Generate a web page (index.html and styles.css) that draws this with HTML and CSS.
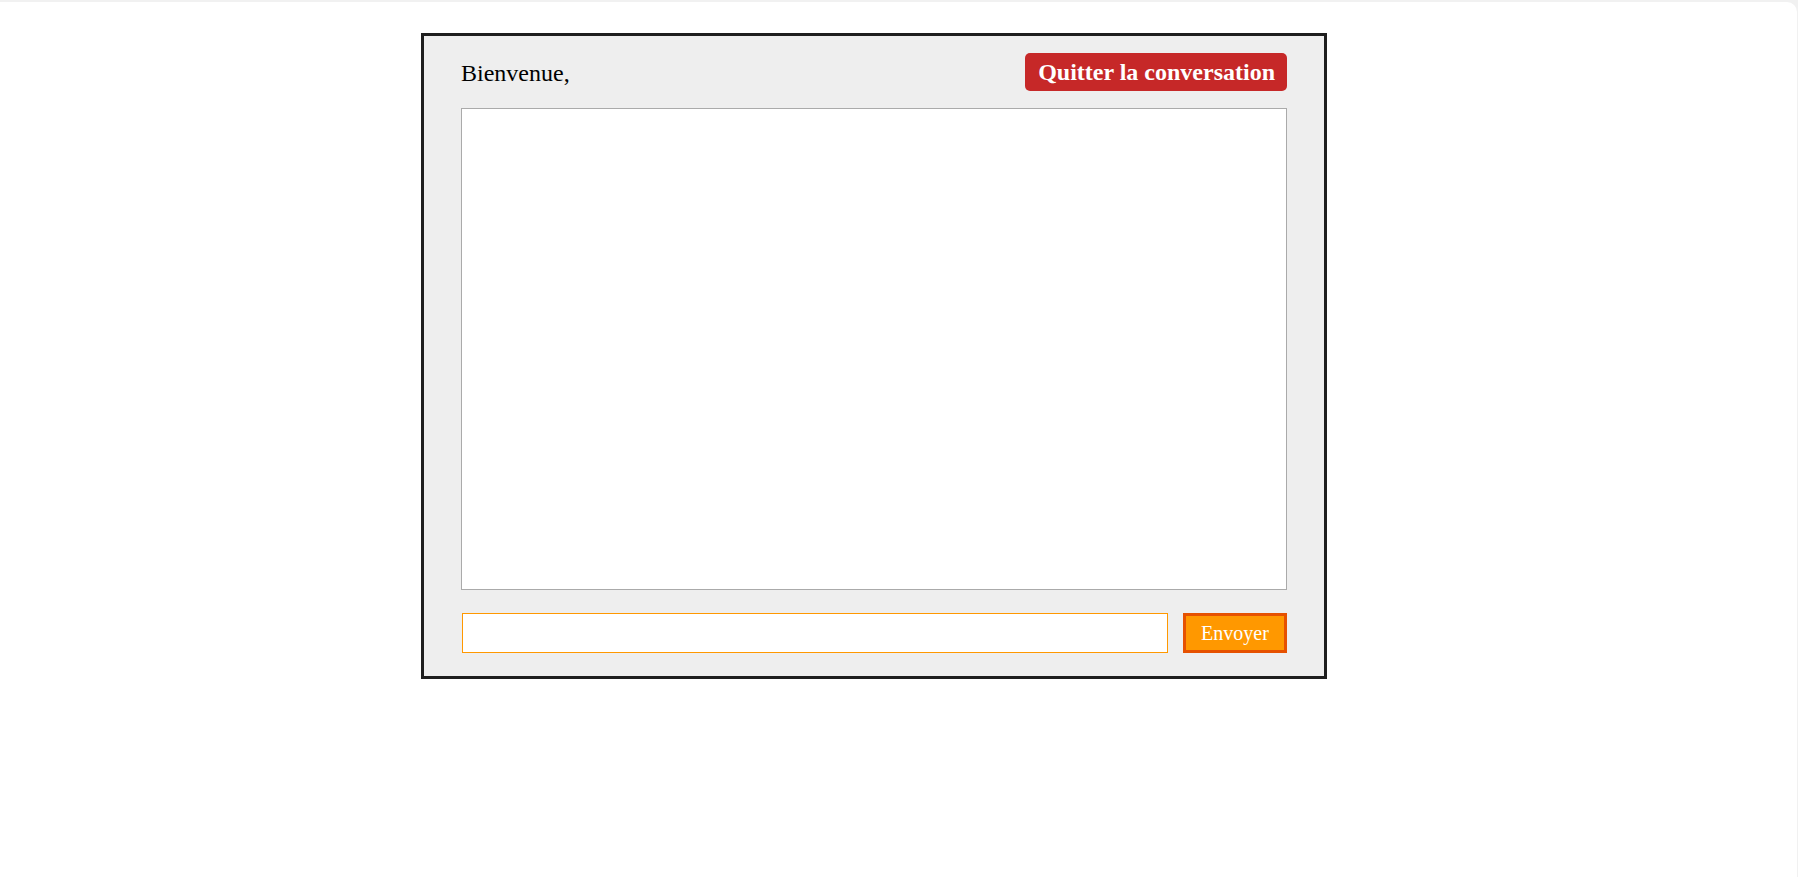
FILE: index.html
```html
<!DOCTYPE html>
<html lang="fr">
<head>
<meta charset="utf-8">
<title>Chat</title>
<link rel="stylesheet" href="styles.css">
</head>
<body>
<div class="page">
  <div class="chat">
    <div class="chat-header">
      <span class="welcome">Bienvenue,</span>
      <button class="leave-btn">Quitter la conversation</button>
    </div>
    <div class="messages"></div>
    <div class="composer">
      <input class="message-input" type="text">
      <button class="send-btn">Envoyer</button>
    </div>
  </div>
</div>
</body>
</html>
```

FILE: styles.css
```css
html {
  background: #f1f1f1;
  margin: 0;
  padding: 0;
}
body {
  margin: 0;
  padding: 2px 1px 0 0;
  font-family: "Liberation Serif", "Times New Roman", serif;
}
.page {
  background: #ffffff;
  border-top-right-radius: 10px;
  min-height: 875px;
  padding-top: 31px;
  box-sizing: border-box;
}
.chat {
  margin-left: 421px;
  border: 3px solid #1e1e1e;
  background: #eeeeee;
  padding: 17px 37px 23px 37px;
  box-sizing: border-box;
  width: 906px;
}
.chat-header {
  display: flex;
  justify-content: space-between;
  align-items: center;
  height: 38px;
  margin-bottom: 17px;
}
.welcome {
  font-size: 24px;
  color: #000;
  line-height: 28px;
  padding-top: 2px;
}
.leave-btn {
  font-family: "Liberation Serif", "Times New Roman", serif;
  font-size: 24px;
  font-weight: bold;
  line-height: 28px;
  color: #ffffff;
  background: #c62828;
  border: none;
  border-radius: 5px;
  padding: 5px 12px 5px 13px;
  height: 38px;
  margin: 0;
}
.messages {
  height: 482px;
  background: #ffffff;
  border: 1px solid #aaaaaa;
  box-sizing: border-box;
  margin-bottom: 23px;
}
.composer {
  display: flex;
  align-items: center;
  gap: 15px;
  height: 40px;
}
.message-input {
  flex: 0 0 706px;
  height: 40px;
  box-sizing: border-box;
  border: 1px solid #ff9800;
  background: #fff;
  margin: 0 0 0 1px;
  padding: 0 6px;
  outline: none;
}
.send-btn {
  width: 104px;
  height: 40px;
  box-sizing: border-box;
  background: #ff9800;
  border: 3px solid #e65100;
  color: #ffffff;
  font-family: "Liberation Serif", "Times New Roman", serif;
  font-size: 20px;
  line-height: 23px;
  padding: 0;
  margin: 0;
}
```
